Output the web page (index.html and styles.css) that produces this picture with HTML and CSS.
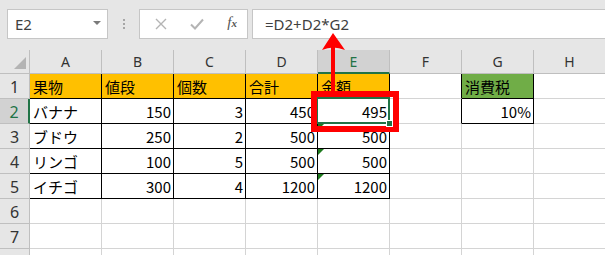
FILE: index.html
```html
<!DOCTYPE html>
<html lang="ja">

<head>
    <meta charset="UTF-8" />
    <title>Excel 数式</title>
    <link rel="stylesheet" href="styles.css">
</head>

<body>
    <div class="app">
        <!-- Formula bar -->
        <div class="toolbar">
            <div class="namebox">
                <span>E2</span>
                <span class="caret"></span>
            </div>
            <div class="grip"><i></i><i></i><i></i></div>
            <div class="fxbox">
                <svg class="ico" width="12" height="12" viewBox="0 0 12 12">
                    <path d="M1 1 L11 11 M11 1 L1 11" stroke="#b4b4b4" stroke-width="1.4" fill="none" />
                </svg>
                <svg class="ico" width="14" height="12" viewBox="0 0 14 12">
                    <path d="M1 6.5 L5 10.5 L13 1.5" stroke="#b4b4b4" stroke-width="2" fill="none" />
                </svg>
                <span class="fx">f<small>x</small></span>
            </div>
            <div class="formula">=D2+D2*G2</div>
        </div>

        <!-- Sheet -->
        <div class="sheet">
            <div class="corner"><span></span></div>
            <div class="ch">A</div>
            <div class="ch">B</div>
            <div class="ch">C</div>
            <div class="ch">D</div>
            <div class="ch sel-col">E</div>
            <div class="ch">F</div>
            <div class="ch">G</div>
            <div class="ch">H</div>

            <div class="rh">1</div>
            <div class="c bk orange">果物</div>
            <div class="c bk orange">値段</div>
            <div class="c bk orange">個数</div>
            <div class="c bk orange">合計</div>
            <div class="c bk orange">金額</div>
            <div class="c edge"></div>
            <div class="c bk green">消費税</div>
            <div class="c"></div>

            <div class="rh sel-row">2</div>
            <div class="c bk">バナナ</div>
            <div class="c bk num">150</div>
            <div class="c bk num">3</div>
            <div class="c bk num">450</div>
            <div class="c bk num active">495</div>
            <div class="c edge"></div>
            <div class="c bk num">10%</div>
            <div class="c"></div>

            <div class="rh">3</div>
            <div class="c bk">ブドウ</div>
            <div class="c bk num">250</div>
            <div class="c bk num">2</div>
            <div class="c bk num">500</div>
            <div class="c bk num warn">500</div>
            <div class="c"></div>
            <div class="c"></div>
            <div class="c"></div>

            <div class="rh">4</div>
            <div class="c bk">リンゴ</div>
            <div class="c bk num">100</div>
            <div class="c bk num">5</div>
            <div class="c bk num">500</div>
            <div class="c bk num warn">500</div>
            <div class="c"></div>
            <div class="c"></div>
            <div class="c"></div>

            <div class="rh">5</div>
            <div class="c bk">イチゴ</div>
            <div class="c bk num">300</div>
            <div class="c bk num">4</div>
            <div class="c bk num">1200</div>
            <div class="c bk num warn">1200</div>
            <div class="c"></div>
            <div class="c"></div>
            <div class="c"></div>

            <div class="rh">6</div>
            <div class="c"></div>
            <div class="c"></div>
            <div class="c"></div>
            <div class="c"></div>
            <div class="c"></div>
            <div class="c"></div>
            <div class="c"></div>
            <div class="c"></div>

            <div class="rh">7</div>
            <div class="c"></div>
            <div class="c"></div>
            <div class="c"></div>
            <div class="c"></div>
            <div class="c"></div>
            <div class="c"></div>
            <div class="c"></div>
            <div class="c"></div>

            <!-- row 8: only its top edge is in view -->
            <div class="rh"></div>
            <div class="c"></div>
            <div class="c"></div>
            <div class="c"></div>
            <div class="c"></div>
            <div class="c"></div>
            <div class="c"></div>
            <div class="c"></div>
            <div class="c"></div>
        </div>

        <!-- Red callout over the sheet -->
        <svg class="marks" width="605" height="255" viewBox="0 0 605 255">
            <rect x="314" y="94" width="82" height="35" fill="none" stroke="#ff0000" stroke-width="6" />
            <rect x="331" y="46" width="4" height="46" fill="#ff0000" />
            <path d="M333 33 L345 50 Q333 45 322 50 Z" fill="#ff0000" />
        </svg>
    </div>
</body>

</html>
```

FILE: styles.css
```css
body {
    margin: 0;
    background: #e6e6e6;
    overflow: hidden;
}

.app {
    position: relative;
    width: 605px;
    height: 255px;
    overflow: hidden;
    font-family: "Noto Sans", "Noto Sans CJK JP", sans-serif;
}

/* ---- formula bar ---- */
.toolbar {
    display: flex;
    align-items: center;
    height: 50px;
    box-sizing: border-box;
    padding: 9px 0 11px 7px;
}

.namebox,
.fxbox,
.formula {
    height: 30px;
    box-sizing: border-box;
    background: white;
    border: 1px solid #c6c6c6;
    display: flex;
    align-items: center;
}

.namebox {
    width: 101px;
    justify-content: space-between;
    padding: 0 6px 0 7px;
    font-size: 15px;
    color: #404040;
}

.caret {
    width: 0;
    height: 0;
    border-left: 4px solid transparent;
    border-right: 4px solid transparent;
    border-top: 4px solid #7a7a7a;
    margin-bottom: 2px;
}

.grip {
    width: 31px;
    display: flex;
    flex-direction: column;
    align-items: center;
    gap: 2px;
}

.grip i {
    width: 2px;
    height: 2px;
    background: #a6a6a6;
}

.fxbox {
    width: 109px;
    padding: 0 10px 0 15px;
    justify-content: space-between;
}

.fx {
    font-family: "Liberation Serif", "DejaVu Serif", serif;
    font-style: italic;
    font-size: 15px;
    color: #555;
    margin-top: -3px;
}

.fx small {
    font-size: 11px;
    font-weight: bold;
}

.formula {
    flex: 1;
    margin-left: 4px;
    border-right: none;
    padding-left: 12px;
    font-size: 15px;
    color: #404040;
}

/* ---- sheet ---- */
.sheet {
    display: grid;
    grid-template-columns: 30px repeat(8, 72px);
    grid-template-rows: 24px repeat(8, 25px);
    background: white;
}

.sheet > div {
    box-sizing: border-box;
    border-right: 1px solid #d4d4d4;
    border-bottom: 1px solid #d4d4d4;
}

.corner {
    background: #e6e6e6;
    display: flex;
    justify-content: flex-end;
    align-items: flex-end;
    padding: 0 3px 4px 0;
}

.sheet > .corner,
.sheet > .ch,
.sheet > .rh {
    border-color: #bfbfbf;
}

.corner span {
    width: 0;
    height: 0;
    border-left: 12px solid transparent;
    border-bottom: 12px solid #b4b4b4;
}

.ch,
.rh {
    background: #e6e6e6;
    color: #333;
    display: flex;
    align-items: center;
    justify-content: center;
}

.ch {
    font-size: 14px;
}

.rh {
    font-size: 16px;
    padding-top: 1px;
}

.sheet > .sel-col {
    background: #d2d2d2;
    color: #217346;
    border-bottom: 2px solid #217346;
}

.sheet > .sel-row {
    background: #d2d2d2;
    color: #217346;
    border-right: 2px solid #217346;
}

.c {
    position: relative;
    display: flex;
    align-items: flex-end;
    padding: 0 2px 2px 3px;
    font-family: "Noto Sans CJK JP", sans-serif;
    font-size: 15px;
    line-height: 19px;
    color: #000;
}

.sheet > .bk {
    border-right-color: #000;
    border-bottom-color: #000;
}

.sheet > .edge {
    border-right-color: #000;
}

.orange {
    background: #ffc000;
}

.green {
    background: #70ad47;
}

.num {
    justify-content: flex-end;
}

.warn::before {
    content: "";
    position: absolute;
    left: 0;
    top: 0;
    border-top: 6px solid #1e7b1e;
    border-right: 6px solid transparent;
}

.active::after {
    content: "";
    position: absolute;
    left: -2px;
    top: -2px;
    right: -1px;
    bottom: -1px;
    border: 2px solid #217346;
}

.active::before {
    content: "";
    position: absolute;
    right: -4px;
    bottom: -4px;
    width: 5px;
    height: 5px;
    background: #217346;
    border: 1px solid white;
    z-index: 1;
}

.marks {
    position: absolute;
    top: 0;
    left: 0;
}
```
